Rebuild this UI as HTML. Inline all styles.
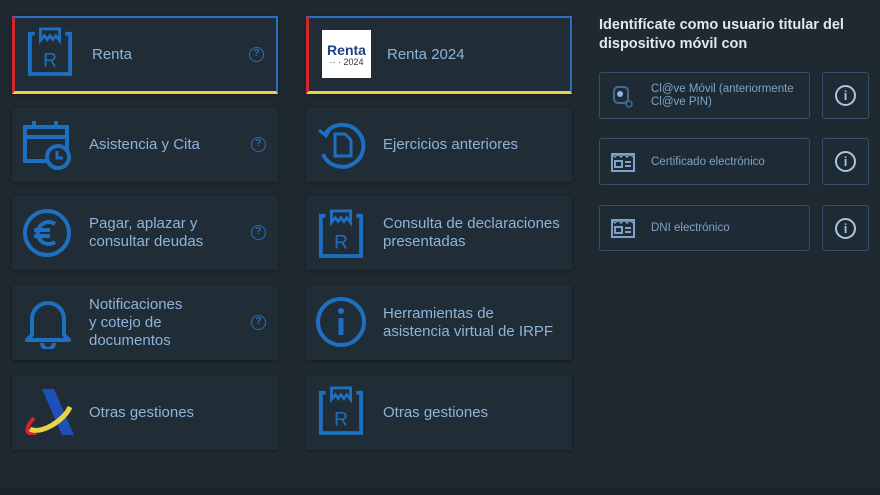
<!DOCTYPE html>
<html><head><meta charset="utf-8"><style>
*{margin:0;padding:0;box-sizing:border-box}
body{width:880px;height:495px;background:#1e2930;font-family:"Liberation Sans",sans-serif;position:relative;overflow:hidden}
.c{position:absolute;background:#212d36;box-shadow:0 1px 3px rgba(0,0,0,.35);color:#8db4da;font-size:15px;line-height:18px}
.c .t{position:absolute;top:50%;transform:translateY(-50%)}
.sel{border:2px solid #2b6ec2;border-left:3px solid #d0262c;border-bottom:3px solid #e8d24a}
.ic{position:absolute}
.q{position:absolute;width:15px;height:15px;border:1.5px solid #2a6fb8;border-radius:50%;color:#2a6fb8;font-size:10px;line-height:12px;text-align:center;font-weight:bold}
.h{position:absolute;left:599px;top:16px;color:#e4e8ec;font-weight:bold;font-size:14.5px;line-height:19px}
.b{position:absolute;border:1px solid #34506a;border-radius:3px;background:#1f2b34;color:#7fa3c6;font-size:11.5px;line-height:13px}
.i{position:absolute;border:1px solid #34506a;border-radius:3px;background:#1f2b34}
.i div{position:absolute;left:12px;top:12px;width:21px;height:21px;border:2px solid #a9c6e3;border-radius:50%;color:#a9c6e3;font-size:13px;font-weight:bold;text-align:center;line-height:17px}
</style></head><body>
<svg width="0" height="0" style="position:absolute"><defs>
<symbol id="r" viewBox="0 0 48 52"><path d="M8 8H3v42h42V8h-5" fill="none" stroke="#1f6fc0" stroke-width="4"/><path d="M14 3h20v12l-4-5-3 4-3-4-3 4-3-4-4 5z" fill="none" stroke="#1f6fc0" stroke-width="3"/><text x="24" y="42" text-anchor="middle" font-family="Liberation Sans" font-size="20" fill="#1f6fc0">R</text></symbol>
</defs></svg>

<div class="c sel" style="left:12px;top:16px;width:266px;height:78px"><svg class="ic" style="left:12px;top:8px" width="46" height="50"><use href="#r"/></svg><span class="t" style="left:77px">Renta</span><div class="q" style="left:234px;top:29px">?</div></div>
<div class="c" style="left:12px;top:108px;width:266px;height:74px">
<svg class="ic" style="left:10px;top:12px" width="52" height="50" viewBox="0 0 52 50"><rect x="3" y="7" width="42" height="34" fill="none" stroke="#1f6fc0" stroke-width="4"/><path d="M3 17h42M12 1v8M34 1v8" stroke="#1f6fc0" stroke-width="4"/><circle cx="36" cy="37" r="11" fill="#212d36" stroke="#1f6fc0" stroke-width="4"/><path d="M35 31v7h6" stroke="#1f6fc0" stroke-width="3" fill="none"/></svg>
<span class="t" style="left:77px">Asistencia y Cita</span><div class="q" style="left:239px;top:29px">?</div></div>
<div class="c" style="left:12px;top:196px;width:266px;height:74px">
<svg class="ic" style="left:10px;top:12px" width="52" height="52" viewBox="0 0 52 52"><circle cx="25" cy="25" r="22" fill="none" stroke="#1f6fc0" stroke-width="4"/><path d="M33 16a11 11 0 1 0 0 18M12 22h16M12 28h16" fill="none" stroke="#1f6fc0" stroke-width="4"/></svg>
<span class="t" style="left:77px">Pagar, aplazar y<br>consultar deudas</span><div class="q" style="left:239px;top:29px">?</div></div>
<div class="c" style="left:12px;top:285px;width:266px;height:75px">
<svg class="ic" style="left:12px;top:10px" width="48" height="54" viewBox="0 0 48 54"><path d="M8 40V24a16 16 0 0 1 32 0v16l5 5H3z" fill="none" stroke="#1f6fc0" stroke-width="4" stroke-linejoin="round"/><path d="M18 48a6 6 0 0 0 12 0" fill="none" stroke="#1f6fc0" stroke-width="4"/></svg>
<span class="t" style="left:77px">Notificaciones<br>y cotejo de<br>documentos</span><div class="q" style="left:239px;top:30px">?</div></div>
<div class="c" style="left:12px;top:375px;width:266px;height:75px">
<svg class="ic" style="left:10px;top:14px" width="52" height="46" viewBox="0 0 52 46"><path d="M20 0h12l20 46H40z" fill="#1f4fb8"/><path d="M14 44c-6 2-10 0-8-6 1-3 3-6 6-9" fill="none" stroke="#d0262c" stroke-width="4"/><path d="M8 40c10 6 34-8 40-22" fill="none" stroke="#e8d24a" stroke-width="5"/></svg>
<span class="t" style="left:77px">Otras gestiones</span></div>

<div class="c sel" style="left:306px;top:16px;width:266px;height:78px"><div style="position:absolute;left:13px;top:12px;width:49px;height:48px;background:#fff;color:#1f3f88;font-weight:bold;font-size:14px;line-height:14px;text-align:center;padding-top:13px">Renta<div style="font-size:9px;font-weight:normal;line-height:10px;color:#333">·· · 2024</div></div><span class="t" style="left:78px">Renta 2024</span></div>
<div class="c" style="left:306px;top:108px;width:266px;height:74px">
<svg class="ic" style="left:11px;top:12px" width="50" height="50" viewBox="0 0 50 50"><path d="M8 14A21 21 0 1 1 6 34" fill="none" stroke="#1f6fc0" stroke-width="4"/><path d="M2 10l7 6 5-8" fill="none" stroke="#1f6fc0" stroke-width="3"/><path d="M18 14h10l6 6v16H18z" fill="none" stroke="#1f6fc0" stroke-width="3"/></svg>
<span class="t" style="left:77px">Ejercicios anteriores</span></div>
<div class="c" style="left:306px;top:196px;width:266px;height:74px"><svg class="ic" style="left:12px;top:12px" width="46" height="50"><use href="#r"/></svg><span class="t" style="left:77px">Consulta de declaraciones<br>presentadas</span></div>
<div class="c" style="left:306px;top:285px;width:266px;height:75px">
<svg class="ic" style="left:10px;top:12px" width="52" height="52" viewBox="0 0 52 52"><circle cx="25" cy="25" r="23" fill="none" stroke="#1f6fc0" stroke-width="4"/><circle cx="25" cy="14" r="3" fill="#1f6fc0"/><path d="M25 21v17" stroke="#1f6fc0" stroke-width="5"/></svg>
<span class="t" style="left:77px">Herramientas de<br>asistencia virtual de IRPF</span></div>
<div class="c" style="left:306px;top:375px;width:266px;height:75px"><svg class="ic" style="left:12px;top:10px" width="46" height="50"><use href="#r"/></svg><span class="t" style="left:77px">Otras gestiones</span></div>

<div class="h">Identifícate como usuario titular del<br>dispositivo móvil con</div>
<div class="b" style="left:599px;top:72px;width:211px;height:47px"><svg style="position:absolute;left:12px;top:12px" width="22" height="24" viewBox="0 0 22 24"><rect x="2" y="2" width="14" height="16" rx="4" fill="none" stroke="#3d6d96" stroke-width="2"/><circle cx="8" cy="9" r="3" fill="#8db4da"/><circle cx="17" cy="19" r="3" fill="none" stroke="#3d6d96" stroke-width="1.5"/></svg><span style="position:absolute;left:51px;top:10px">Cl@ve Móvil (anteriormente<br>Cl@ve PIN)</span></div>
<div class="i" style="left:822px;top:72px;width:47px;height:47px"><div>i</div></div>
<div class="b" style="left:599px;top:138px;width:211px;height:47px"><svg style="position:absolute;left:10px;top:12px" width="26" height="22" viewBox="0 0 26 22"><path d="M2 3h22v17H2z" fill="none" stroke="#7fa3c6" stroke-width="2"/><path d="M2 3l3 3 3-3 3 3 3-3 3 3 3-3 3 3" fill="none" stroke="#7fa3c6" stroke-width="1.5"/><rect x="5" y="10" width="7" height="6" fill="none" stroke="#7fa3c6" stroke-width="2"/><path d="M15 11h6M15 15h6" stroke="#7fa3c6" stroke-width="2"/></svg><span style="position:absolute;left:51px;top:17px">Certificado electrónico</span></div>
<div class="i" style="left:822px;top:138px;width:47px;height:47px"><div>i</div></div>
<div class="b" style="left:599px;top:205px;width:211px;height:46px"><svg style="position:absolute;left:10px;top:11px" width="26" height="22" viewBox="0 0 26 22"><path d="M2 3h22v17H2z" fill="none" stroke="#7fa3c6" stroke-width="2"/><path d="M2 3l3 3 3-3 3 3 3-3 3 3 3-3 3 3" fill="none" stroke="#7fa3c6" stroke-width="1.5"/><rect x="5" y="10" width="7" height="6" fill="none" stroke="#7fa3c6" stroke-width="2"/><path d="M15 11h6M15 15h6" stroke="#7fa3c6" stroke-width="2"/></svg><span style="position:absolute;left:51px;top:16px">DNI electrónico</span></div>
<div class="i" style="left:822px;top:205px;width:47px;height:46px"><div>i</div></div>
<div style="position:absolute;left:0;top:488px;width:880px;height:7px;background:#1a242b"></div>
</body></html>
